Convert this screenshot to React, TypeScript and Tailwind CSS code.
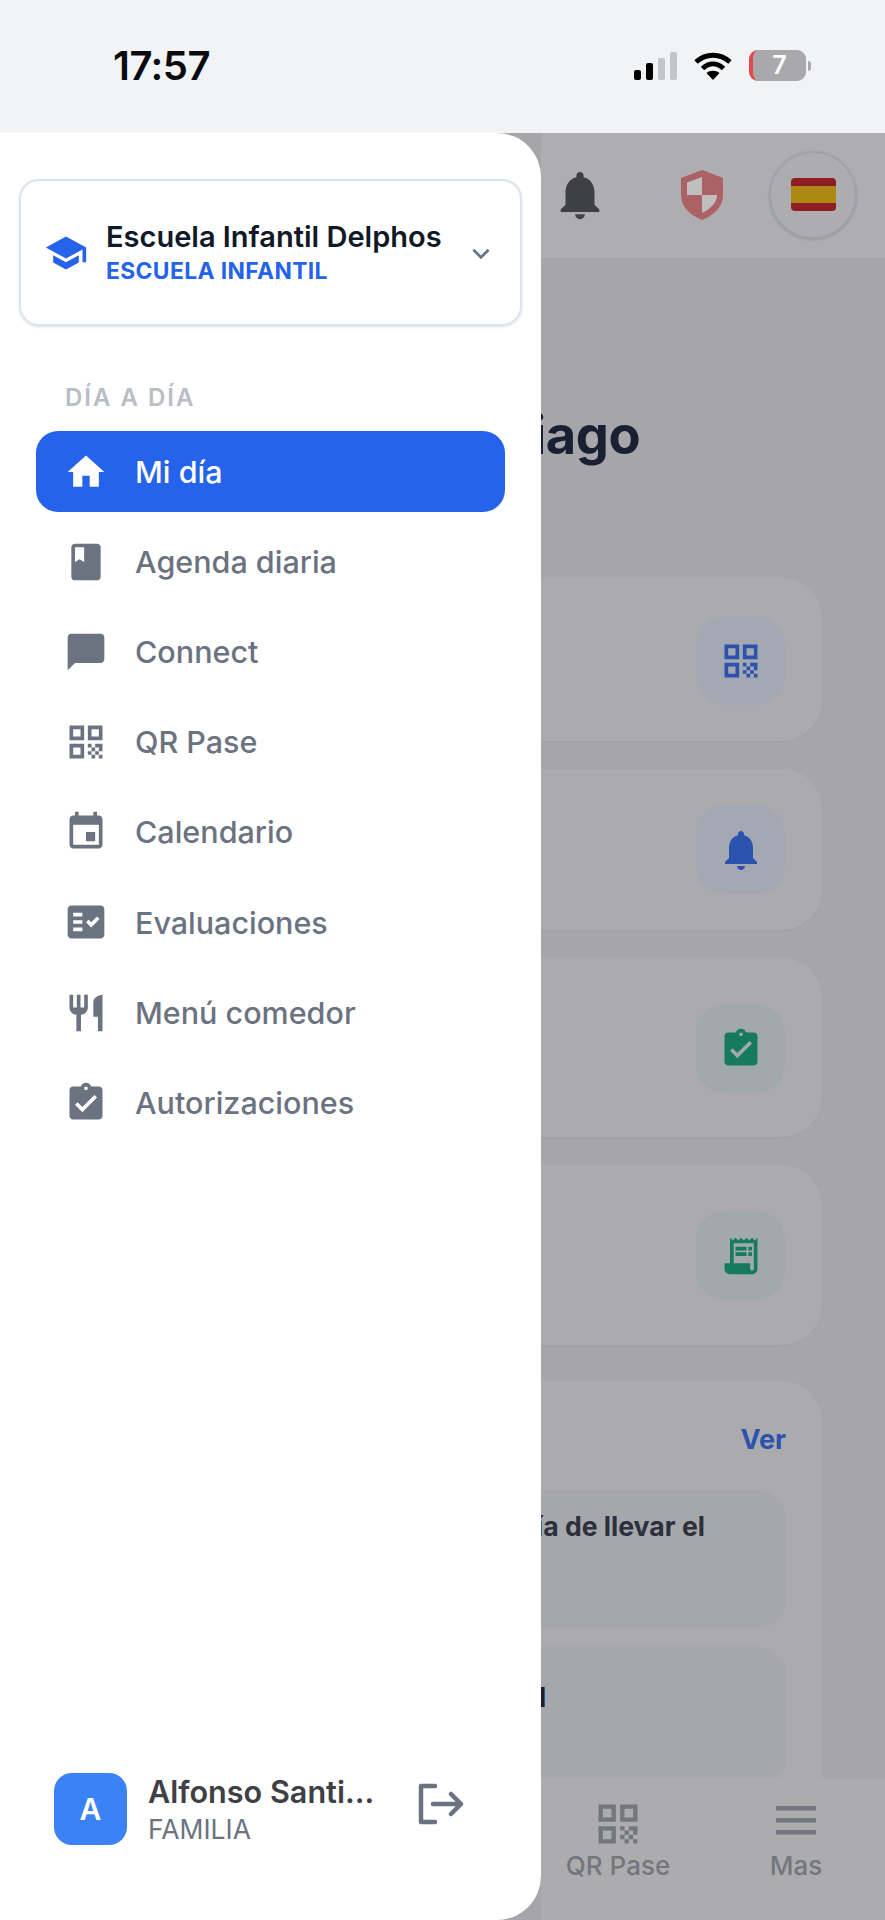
import type { ReactNode } from "react";

const font = { fontFamily: "Inter, 'Noto Sans', sans-serif" };

// material-style filled glyphs, all on a 24 box
const paths = {
  home: "M10 20v-6h4v6h5v-8h3L12 3 2 12h3v8z",
  book: "M18 2H6c-1.1 0-2 .9-2 2v16c0 1.1.9 2 2 2h12c1.1 0 2-.9 2-2V4c0-1.1-.9-2-2-2zM6 4h5v8l-2.5-1.5L6 12V4z",
  chat: "M20 2H4c-1.1 0-1.99.9-1.99 2L2 22l4-4h14c1.1 0 2-.9 2-2V4c0-1.1-.9-2-2-2z",
  qr: "M3 11h8V3H3v8zm2-6h4v4H5V5zM3 21h8v-8H3v8zm2-6h4v4H5v-4zM13 3v8h8V3h-8zm6 6h-4V5h4v4zM13 13h2v2h-2zM15 15h2v2h-2zM13 17h2v2h-2zM15 19h2v2h-2zM17 17h2v2h-2zM19 19h2v2h-2zM19 15h2v2h-2zM17 13h2v2h-2zM19 13h2v2h-2z",
  calendar: "M17 12h-5v5h5v-5zM16 1v2H8V1H6v2H5c-1.11 0-1.99.9-1.99 2L3 19c0 1.1.89 2 2 2h14c1.1 0 2-.9 2-2V5c0-1.1-.9-2-2-2h-1V1h-2zm3 18H5V8h14v11z",
  fact: "M20 3H4c-1.1 0-2 .9-2 2v14c0 1.1.9 2 2 2h16c1.1 0 2-.9 2-2V5c0-1.1-.9-2-2-2zM10 17H5v-2h5v2zm0-4H5v-2h5v2zm0-4H5V7h5v2zm4.82 6L12 12.16l1.41-1.41 1.41 1.42L17.99 9l1.42 1.42L14.82 15z",
  food: "M11 9H9V2H7v7H5V2H3v7c0 2.12 1.66 3.84 3.75 3.97V22h2.5v-9.03C11.34 12.84 13 11.12 13 9V2h-2v7zm5-3v8h2.5v8H21V2c-2.76 0-5 2.24-5 4z",
  clipboard: "M19 3h-4.18C14.4 1.84 13.3 1 12 1c-1.3 0-2.4.84-2.82 2H5c-1.1 0-2 .9-2 2v14c0 1.1.9 2 2 2h14c1.1 0 2-.9 2-2V5c0-1.1-.9-2-2-2zm-7 0c.55 0 1 .45 1 1s-.45 1-1 1-1-.45-1-1 .45-1 1-1zm-2 14l-4-4 1.41-1.41L10 14.17l6.59-6.59L18 9l-8 8z",
  bell: "M12 22c1.1 0 2-.9 2-2h-4c0 1.1.9 2 2 2zm6-6v-5c0-3.07-1.63-5.64-4.5-6.32V4c0-.83-.67-1.5-1.5-1.5s-1.5.67-1.5 1.5v.68C7.64 5.36 6 7.92 6 11v5l-2 2v1h16v-1l-2-2z",
  receipt: "M19.5 3.5 18 2l-1.5 1.5L15 2l-1.5 1.5L12 2l-1.5 1.5L9 2 7.5 3.5 6 2v14H3v3c0 1.66 1.34 3 3 3h12c1.66 0 3-1.34 3-3V2l-1.5 1.5zM19 19c0 .55-.45 1-1 1s-1-.45-1-1v-3H8V5h11v14zM9 7h6v2H9zM16 7h2v2h-2zM9 10h6v2H9zM16 10h2v2h-2z",
  school: "M5 13.18v4L12 21l7-3.82v-4L12 17l-7-3.82zM12 3 1 9l11 6 9-4.91V17h2V9L12 3z",
};

const Glyph = ({ d, className }: { d: string; className: string }) => (
  <svg viewBox="0 0 24 24" className={className} fill="currentColor">
    <path d={d} fillRule="evenodd" />
  </svg>
);

const items = [
  { label: "Agenda diaria", icon: paths.book },
  { label: "Connect", icon: paths.chat },
  { label: "QR Pase", icon: paths.qr },
  { label: "Calendario", icon: paths.calendar },
  { label: "Evaluaciones", icon: paths.fact },
  { label: "Menú comedor", icon: paths.food },
  { label: "Autorizaciones", icon: paths.clipboard },
];

const StatusBar = () => (
  <div className="flex h-[133px] items-center justify-between bg-[#f2f3f5] pb-[2px] pl-[113px] pr-[74px]">
    <span className="text-[40px] font-semibold leading-none tracking-[-0.5px] text-[#0b0b0f]">17:57</span>
    <div className="flex items-center">
      <div className="flex items-end gap-[5px]">
        <div className="h-[10px] w-[7px] rounded-[2px] bg-black" />
        <div className="h-[17px] w-[7px] rounded-[2px] bg-black" />
        <div className="h-[22px] w-[7px] rounded-[2px] bg-[#c4c5c7]" />
        <div className="h-[28px] w-[7px] rounded-[2px] bg-[#c4c5c7]" />
      </div>
      <svg viewBox="0 0 40 30" className="ml-[16px] h-[30px] w-[40px]" fill="none" stroke="#000" strokeWidth="5">
        <path d="M3 11c10-9 24-9 34 0" />
        <path d="M9.500 17.500c6.500-6 14.500-6 21 0" />
        <path d="M20 29l-6.500-7c3.500-3 9.500-3 13 0z" fill="#000" stroke="none" />
      </svg>
      <div className="ml-[16px] flex items-center gap-[2px]">
        <div className="flex h-[31px] w-[57px] items-center justify-center overflow-hidden rounded-[9px] border-l-[4px] border-[#e5484d] bg-[#a9a9ab] text-[25px] font-semibold text-white">
          7
        </div>
        <div className="h-[10px] w-[3px] rounded-r-full bg-[#a9a9ab]" />
      </div>
    </div>
  </div>
);

const Drawer = () => (
  <aside className="relative z-10 flex h-[1787px] w-[541px] shrink-0 flex-col rounded-r-[44px] bg-white">
    <div className="mx-[19px] mt-[46px] flex h-[147px] items-center rounded-[20px] border-2 border-[#dce3ec] pl-[23px] pr-[26px] shadow-sm">
      <Glyph d={paths.school} className="h-[44px] w-[44px] shrink-0 text-[#2563eb]" />
      <div className="ml-[18px] flex-1">
        <div className="text-[29px] font-semibold leading-[36px] text-[#111827]">Escuela Infantil Delphos</div>
        <div className="text-[22.800px] font-bold leading-[32px] tracking-[0.4px] text-[#2563eb]">ESCUELA INFANTIL</div>
      </div>
      <svg viewBox="0 0 24 24" className="h-[26px] w-[26px] text-[#64748b]" fill="none" stroke="currentColor" strokeWidth="2.500">
        <path d="m5 9 7 7 7-7" />
      </svg>
    </div>
    <div className="ml-[65px] mt-[59px] text-[24px] font-semibold leading-[26px] tracking-[2px] text-[#b9bdc5]">DÍA A DÍA</div>
    <nav className="mx-[36px] mt-[20px] flex flex-col gap-[9.200px]">
      <div className="flex h-[81px] items-center rounded-[22px] bg-[#2563eb] pl-[28px] text-white">
        <Glyph d={paths.home} className="h-[44px] w-[44px] shrink-0" />
        <span className="ml-[27px] text-[30.500px] font-medium">Mi día</span>
      </div>
      {items.map((item) => (
        <div key={item.label} className="flex h-[81px] items-center pl-[28px] text-[#6b7280]">
          <Glyph d={item.icon} className="h-[44px] w-[44px] shrink-0" />
          <span className="ml-[27px] text-[30.500px] font-medium">{item.label}</span>
        </div>
      ))}
    </nav>
    <div className="mt-auto mb-[73px] ml-[54px] flex items-center">
      <div className="flex h-[72px] w-[73px] items-center justify-center rounded-[18px] bg-[#3b82f6] text-[30px] font-semibold text-white">
        A
      </div>
      <div className="ml-[21px] w-[226px] pt-[2px]">
        <div className="whitespace-nowrap text-[30.600px] font-semibold leading-[38px] text-[#3f3f46]">Alfonso Santi…</div>
        <div className="text-[26.500px] leading-[36px] text-[#6b7280]">FAMILIA</div>
      </div>
      <svg viewBox="0 0 46 42" className="ml-[44px] mb-[10px] h-[42px] w-[46px] text-[#6b7280]" fill="none" stroke="currentColor" strokeWidth="4.500" strokeLinecap="round" strokeLinejoin="round">
        <path d="M17 3H3v36h14" />
        <path d="M15 21h28M33 11l10 10-10 10" />
      </svg>
    </div>
  </aside>
);

const ActionCard = ({ className, tile, icon, iconColor, iconSize }: { className: string; tile: string; icon: string; iconColor: string; iconSize: string }) => (
  <div className={`flex items-start justify-end rounded-r-[40px] bg-[#ababad] pr-[37px] shadow-[0_1px_2px_rgba(0,0,0,0.03)] ${className}`}>
    <div className={`flex h-[89px] w-[89px] items-center justify-center rounded-[28px] ${tile}`}>
      <Glyph d={icon} className={`${iconSize} ${iconColor}`} />
    </div>
  </div>
);

// dimmed page that sits behind the open drawer
const Page = () => (
  <main className="-ml-[60px] flex h-[1787px] min-w-0 flex-1 flex-col overflow-hidden bg-[#a6a6aa] pl-[60px]">
    <header className="flex h-[125px] shrink-0 items-center bg-[#aeaeb0] pl-[10px]">
      <Glyph d={paths.bell} className="-mt-[2px] h-[58px] w-[58px] text-[#3f3f46]" />
      <svg viewBox="0 0 42 50" className="ml-[72px] -mt-[2px] h-[50px] w-[42px]">
        <path d="M21 0 42 8v17c0 12-9 20-21 25C9 45 0 37 0 25V8z" fill="#ac6164" />
        <path d="M21 7 6 12.500V25h15zM21 25v18c8-4 15-10 15-18z" fill="#c0bfc0" />
      </svg>
      <div className="ml-[46px] -mt-[2px] flex h-[88px] w-[88px] items-center justify-center rounded-full border-2 border-[#9ea3aa] bg-[#adadaf] shadow-sm">
        <div className="flex h-[33px] w-[45px] flex-col overflow-hidden rounded-[4px]">
          <div className="h-[8px] bg-[#8f1d26]" />
          <div className="flex-1 bg-[#ad8913]" />
          <div className="h-[8px] bg-[#8f1d26]" />
        </div>
      </div>
    </header>
    <h1 className="-ml-[9px] mt-[149px] text-[52.500px] font-bold leading-[56px] tracking-[-0.5px] text-[#1a2033]">iago</h1>
    <div className="mt-[115px] flex flex-col pr-[63px]">
      <ActionCard className="h-[163px] pt-[38px]" tile="bg-[#a3a8b3]" icon={paths.qr} iconColor="text-[#2b52ad]" iconSize="h-[44px] w-[44px]" />
      <ActionCard className="mt-[28px] h-[161px] pt-[36px]" tile="bg-[#a3a8b3]" icon={paths.bell} iconColor="text-[#2b52ad]" iconSize="h-[48px] w-[48px]" />
      <ActionCard className="mt-[28px] h-[179px] pt-[46px]" tile="bg-[#a1aaa9]" icon={paths.clipboard} iconColor="text-[#167a5c]" iconSize="h-[44px] w-[44px]" />
      <ActionCard className="mt-[28px] h-[180px] pt-[46px]" tile="bg-[#a1aaa9]" icon={paths.receipt} iconColor="text-[#167a5c]" iconSize="h-[44px] w-[44px]" />
      <div className="mt-[36px] h-[500px] rounded-tr-[40px] bg-[#ababad] pr-[36px] pt-[42px]">
        <div className="text-right text-[27px] font-bold leading-[34px] text-[#2b52ad]">Ver</div>
        <div className="mt-[33px] h-[138px] rounded-r-[28px] bg-[#a6a7aa] pt-[18px] text-[26.600px] font-bold leading-[36px] text-[#2c303c]">
          <div className="-ml-[5px]">ía de llevar el</div>
        </div>
        <div className="mt-[19px] h-[138px] rounded-r-[28px] bg-[#a6a7aa] pt-[32px] text-[26.600px] font-bold leading-[36px] text-[#1a1f2e]">
          <div className="-ml-[2px]">l</div>
        </div>
      </div>
    </div>
  </main>
);

const App = () => (
  <div className="flex h-[1920px] w-[885px] flex-col overflow-hidden bg-white" style={font}>
    <StatusBar />
    <div className="relative flex flex-1">
      <Drawer />
      <Page />
      <nav className="absolute bottom-0 left-[541px] right-0 z-0 flex h-[142px] items-start bg-[#acacae] pt-[20px] text-[#74767d]">
        <div className="ml-[24px] flex w-[106px] flex-col items-center">
          <Glyph d={paths.qr} className="h-[52px] w-[52px]" />
          <span className="text-[26px] font-medium leading-[32px] whitespace-nowrap">QR Pase</span>
        </div>
        <div className="ml-[95px] flex w-[60px] flex-col items-center">
          <svg viewBox="0 0 40 30" className="mb-[4px] mt-[8px] h-[30px] w-[40px]" fill="currentColor">
            <path d="M0 0h40v4.500H0zM0 12h40v4.500H0zM0 24h40v4.500H0z" />
          </svg>
          <span className="mt-[10px] text-[26px] font-medium leading-[32px]">Mas</span>
        </div>
      </nav>
    </div>
  </div>
);

export default App;
